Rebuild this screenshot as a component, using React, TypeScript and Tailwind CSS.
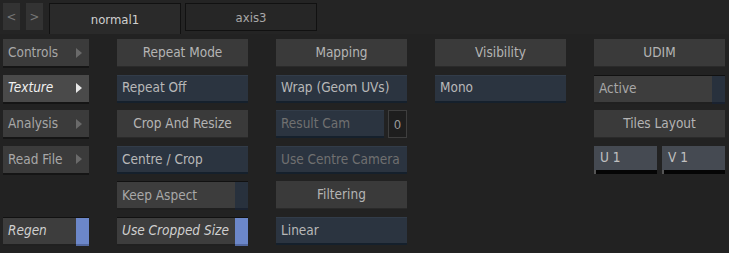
import React from "react";

const font = { fontFamily: '"DejaVu Sans Condensed", "DejaVu Sans", sans-serif', fontStretch: "condensed" as const };

function Arrow({ light }: { light?: boolean }) {
  return (
    <svg width="6" height="10" viewBox="0 0 6 10" className="shrink-0">
      <path d="M0 0 L6 5 L0 10 Z" fill={light ? "#e8e8e8" : "#6a6a6a"} />
    </svg>
  );
}

function MenuBtn({ label, active }: { label: string; active?: boolean }) {
  return (
    <div
      className={`h-[29px] flex items-center justify-between pl-[5px] pr-[7px] border-b-2 border-[#151515] ${
        active ? "bg-[#4a4a4a] text-[#f0f0f0] italic" : "bg-[#3b3b3b] text-[#a8a8a8]"
      }`}
    >
      <span>{label}</span>
      <Arrow light={active} />
    </div>
  );
}

function Header({ label }: { label: string }) {
  return (
    <div className="h-[28px] flex items-center justify-center bg-[#3a3a3a] text-[#b4b4b4] border-b border-[#2a2a2a]">
      {label}
    </div>
  );
}

function Drop({ label, dim }: { label: string; dim?: boolean }) {
  return (
    <div
      className={`h-[28px] flex items-center px-[5px] whitespace-nowrap bg-[#2b3440] border-t border-[#323c49] border-b-2 border-b-[#15202c] ${
        dim ? "text-[#707070]" : "text-[#b8b8b8]"
      }`}
    >
      {label}
    </div>
  );
}

function Toggle({ label, on, italic }: { label: string; on?: boolean; italic?: boolean }) {
  return (
    <div className="h-[29px] flex border-t border-[#111]">
      <div
        className={`flex-1 flex items-center px-[5px] whitespace-nowrap bg-[#3d3d3d] border-b-2 border-[#202020] ${
          italic ? "italic text-[#d0d0d0]" : "text-[#a8a8a8]"
        }`}
      >
        {label}
      </div>
      <div
        className={`w-[13px] ${on ? "bg-[#6c87c9] border-b-2 border-[#5268a0]" : "bg-[#28313d] border-b-2 border-[#1a2230]"}`}
      />
    </div>
  );
}

export default function App() {
  return (
    <div className="w-[729px] h-[253px] bg-[#222222] text-[13.5px] leading-none overflow-hidden" style={font}>
      {/* tab bar */}
      <div className="h-[34px] flex items-start pt-[3px] pl-[3px] bg-[#242424]">
        <div className="w-[17px] h-[27px] bg-[#333] flex items-center justify-center text-[#777] text-[13px]">&lt;</div>
        <div className="w-[17px] h-[27px] ml-[6px] bg-[#333] flex items-center justify-center text-[#777] text-[13px]">&gt;</div>
        <div className="w-[132px] h-[31px] ml-[6px] bg-[#2a2a2a] border border-[#111] border-b-0 flex items-center justify-center text-[#cfcfcf] text-[13px]">
          normal1
        </div>
        <div className="w-[132px] h-[28px] ml-[4px] bg-[#262626] border border-[#111] flex items-center justify-center text-[#a8a8a8] text-[13px]">
          axis3
        </div>
      </div>

      {/* panels */}
      <div className="flex gap-[28px] pl-[3px] pt-[5px]">
        <div className="w-[86px] grid grid-rows-[repeat(6,28px)] gap-y-[7.6px]">
          <MenuBtn label="Controls" />
          <MenuBtn label="Texture" active />
          <MenuBtn label="Analysis" />
          <MenuBtn label="Read File" />
          <div />
          <Toggle label="Regen" on italic />
        </div>

        <div className="w-[131px] grid grid-rows-[repeat(6,28px)] gap-y-[7.6px]">
          <Header label="Repeat Mode" />
          <Drop label="Repeat Off" />
          <Header label="Crop And Resize" />
          <Drop label="Centre / Crop" />
          <Toggle label="Keep Aspect" />
          <Toggle label="Use Cropped Size" on italic />
        </div>

        <div className="w-[131px] grid grid-rows-[repeat(6,28px)] gap-y-[7.6px]">
          <Header label="Mapping" />
          <Drop label="Wrap (Geom UVs)" />
          <div className="flex gap-[4px]">
            <div className="flex-1">
              <Drop label="Result Cam" dim />
            </div>
            <div className="w-[19px] h-[28px] border border-[#3e3e3e] bg-[#1e1e1e] flex items-center justify-center text-[#9a9a9a] text-[13px]">
              0
            </div>
          </div>
          <Drop label="Use Centre Camera" dim />
          <Header label="Filtering" />
          <Drop label="Linear" />
        </div>

        <div className="w-[131px] grid grid-rows-[repeat(6,28px)] gap-y-[7.6px]">
          <Header label="Visibility" />
          <Drop label="Mono" />
        </div>

        <div className="w-[131px] grid grid-rows-[repeat(6,28px)] gap-y-[7.6px]">
          <Header label="UDIM" />
          <Toggle label="Active" />
          <Header label="Tiles Layout" />
          <div className="flex gap-[5px]">
            {["U 1", "V 1"].map((t) => (
              <div key={t} className="flex-1 h-[28px] flex flex-col">
                <div className="flex-1 bg-[#454a52] text-[#c0c0c0] flex items-center px-[6px]">{t}</div>
                <div className="h-[4px] bg-[#050505] border-l-2 border-[#555]" />
              </div>
            ))}
          </div>
        </div>
      </div>
    </div>
  );
}
